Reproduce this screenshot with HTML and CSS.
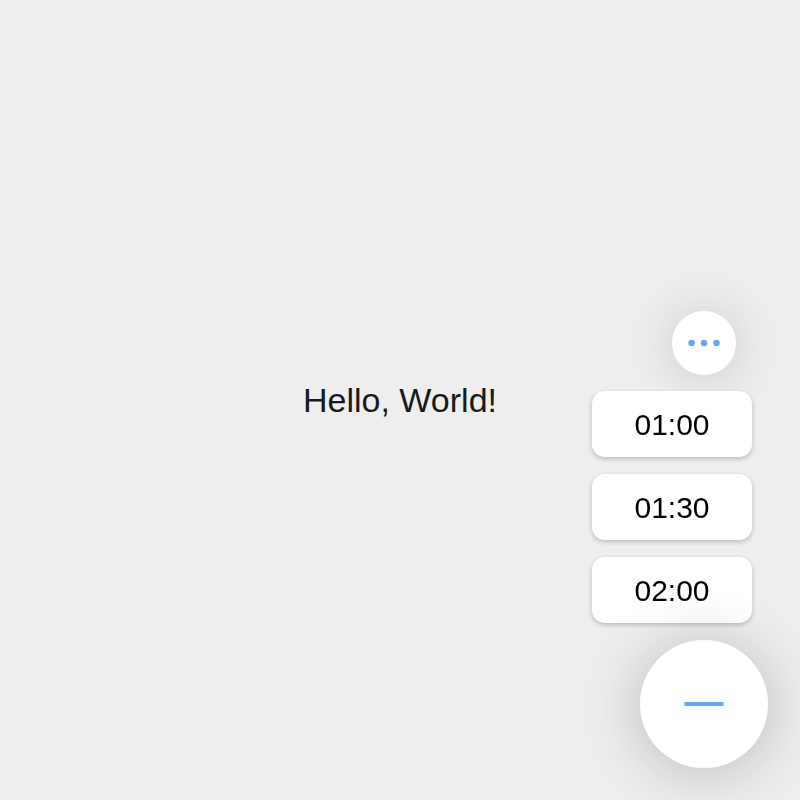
FILE: index.html
```html
<!DOCTYPE html>
<html>
<head>
<meta charset="utf-8">
<link rel="stylesheet" href="styles.css">
</head>
<body>
<main class="page">
  <p class="greeting">Hello, World!</p>
</main>
<div class="fab-menu">
  <button class="more-btn" aria-label="More">
    <svg width="32" height="8" viewBox="0 0 32 8"><circle cx="3.5" cy="4" r="3.2" fill="#5fa7f7"/><circle cx="16" cy="4" r="3.2" fill="#5fa7f7"/><circle cx="28.5" cy="4" r="3.2" fill="#5fa7f7"/></svg>
  </button>
  <div class="times">
    <button class="time-btn">01:00</button>
    <button class="time-btn">01:30</button>
    <button class="time-btn">02:00</button>
  </div>
  <button class="fab" aria-label="Close">
    <span class="minus"></span>
  </button>
</div>
</body>
</html>
```
FILE: styles.css
```css
html, body {
  margin: 0;
  padding: 0;
  background: #eeeeee;
  font-family: "Liberation Sans", Arial, sans-serif;
}
.page {
  height: 100vh;
  display: flex;
  align-items: center;
  justify-content: center;
}
.greeting {
  margin: 0;
  font-size: 34px;
  color: #1a1a1a;
}
.fab-menu {
  position: fixed;
  right: 32px;
  bottom: 32px;
  display: flex;
  flex-direction: column;
  align-items: flex-end;
}
button {
  border: none;
  padding: 0;
  font-family: inherit;
  cursor: pointer;
}
.more-btn {
  width: 64px;
  height: 64px;
  border-radius: 50%;
  background: #fff;
  margin-right: 32px;
  margin-bottom: 16px;
  display: flex;
  align-items: center;
  justify-content: center;
  box-shadow: 0 2px 50px rgba(0,0,0,0.16);
}
.more-btn svg { display: block; }
.times {
  display: flex;
  flex-direction: column;
  gap: 17px;
  margin-right: 16px;
  margin-bottom: 17px;
}
.time-btn {
  width: 160px;
  height: 66px;
  border-radius: 13px;
  background: #fff;
  color: #000;
  font-size: 30px;
  padding-top: 2px;
  box-shadow: 0 2px 5px rgba(0,0,0,0.22);
}
.fab {
  width: 128px;
  height: 128px;
  border-radius: 50%;
  background: #fff;
  display: flex;
  align-items: center;
  justify-content: center;
  box-shadow: 0 4px 60px rgba(0,0,0,0.22);
}
.minus {
  display: block;
  width: 40px;
  height: 4px;
  border-radius: 2px;
  background: #5fa7f7;
}
```
